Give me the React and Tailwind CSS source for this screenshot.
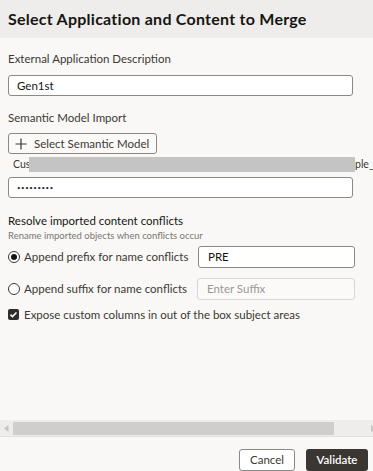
import React from 'react';

const font = { fontFamily: 'Lato, "Noto Sans", sans-serif' };

export default function App() {
  return (
    <div className="w-[373px] h-[471px] bg-[#f9f8f6] flex flex-col overflow-hidden text-[#161513]" style={font}>
      <div className="h-[38px] bg-[#efedeb] flex items-center px-2 shrink-0">
        <h1 className="text-[16px] font-bold text-[#161513] tracking-[0.25px]">Select Application and Content to Merge</h1>
      </div>

      <div className="flex-1 px-2 pt-[13px] overflow-hidden">
        <div className="text-[11.5px] leading-[16px] text-[#3b3834]">External Application Description</div>
        <div className="mt-[8px] w-[345px] h-[21px] border border-[#8c8985] rounded-[3px] bg-white flex items-center px-[8px] text-[11.5px]">Gen1st</div>

        <div className="mt-[14px] text-[11.5px] leading-[16px] text-[#3b3834]">Semantic Model Import</div>
        <div className="mt-[7px] w-[149px] h-[21px] border border-[#8c8985] rounded-[3px] bg-[#fbfaf9] flex items-center gap-[7px] px-[6px] text-[11.5px] text-[#3b3834] whitespace-nowrap">
          <svg className="shrink-0" width="12" height="12" viewBox="0 0 12 12"><path d="M6 0.5v11M0.5 6h11" stroke="#3b3834" strokeWidth="1.2" /></svg>
          <span>Select Semantic Model</span>
        </div>
        <div className="mt-[3px] h-[15px] flex items-center text-[10.5px] text-[#3b3834] whitespace-nowrap">
          <span className="pl-[5px] w-[21px]">Cus</span>
          <span className="w-[326px] h-[15px] bg-[#c4c4c4] shrink-0"></span>
          <span>ple_</span>
        </div>
        <div className="mt-[5px] w-[345px] h-[21px] border border-[#8c8985] rounded-[3px] bg-white flex items-center px-[8px] text-[6px] tracking-[0.6px] text-[#2f2c29]">•••••••••</div>

        <div className="mt-[15px] text-[11.5px] leading-[16px] text-[#161513]">Resolve imported content conflicts</div>
        <div className="mt-[0px] text-[9.5px] leading-[13px] text-[#7a7673]">Rename imported objects when conflicts occur</div>

        <div className="mt-[4px] flex items-center h-[22px] whitespace-nowrap">
          <span className="w-[12px] h-[12px] rounded-full border border-[#3b3834] flex items-center justify-center bg-white shrink-0">
            <span className="w-[6px] h-[6px] rounded-full bg-[#161513]"></span>
          </span>
          <span className="ml-[4px] w-[174px] text-[11.5px] text-[#3b3834]">Append prefix for name conflicts</span>
          <div className="w-[157px] h-[22px] border border-[#8c8985] rounded-[3px] bg-white flex items-center px-[9px] text-[11.5px]">PRE</div>
        </div>
        <div className="mt-[10px] flex items-center h-[22px] whitespace-nowrap">
          <span className="w-[12px] h-[12px] rounded-full border border-[#3b3834] bg-white shrink-0"></span>
          <span className="ml-[4px] w-[173px] text-[11.5px] text-[#3b3834]">Append suffix for name conflicts</span>
          <div className="w-[158px] h-[22px] border border-[#d9d7d4] rounded-[3px] bg-[#fbfaf9] flex items-center px-[9px] text-[11.5px] text-[#9b9794]">Enter Suffix</div>
        </div>
        <div className="mt-[6px] flex items-center">
          <span className="w-[11px] h-[11px] rounded-[2px] bg-[#2f2c29] flex items-center justify-center">
            <svg width="9" height="9" viewBox="0 0 9 9"><path d="M1.5 4.6l2 2 4-4.2" fill="none" stroke="white" strokeWidth="1.5" /></svg>
          </span>
          <span className="ml-[5px] text-[11.5px] text-[#3b3834]">Expose custom columns in out of the box subject areas</span>
        </div>
      </div>

      <div className="h-[17px] bg-[#efedeb] flex items-center shrink-0 border-b border-[#e2e0dd]">
        <span className="w-[13px] flex justify-center">
          <svg width="5" height="7" viewBox="0 0 5 7"><path d="M4.5 0L0 3.5 4.5 7z" fill="#c8c6c3" /></svg>
        </span>
        <span className="w-[321px] h-[13px] bg-[#cfcecc]"></span>
        <span className="flex-1 flex justify-end">
          <svg width="2" height="7" viewBox="0 0 2 7"><path d="M0 0L2 1V6L0 7z" fill="#c8c6c3" /></svg>
        </span>
      </div>

      <div className="h-[34px] flex items-center justify-end gap-[11px] pr-[5px] pt-[12px] shrink-0">
        <button className="w-[56px] h-[22px] border border-[#8c8985] rounded-[3px] bg-white text-[11.5px] text-[#3b3834]">Cancel</button>
        <button className="w-[62px] h-[22px] rounded-[3px] bg-[#3a3632] text-[11.5px] font-semibold text-white">Validate</button>
      </div>
    </div>
  );
}
